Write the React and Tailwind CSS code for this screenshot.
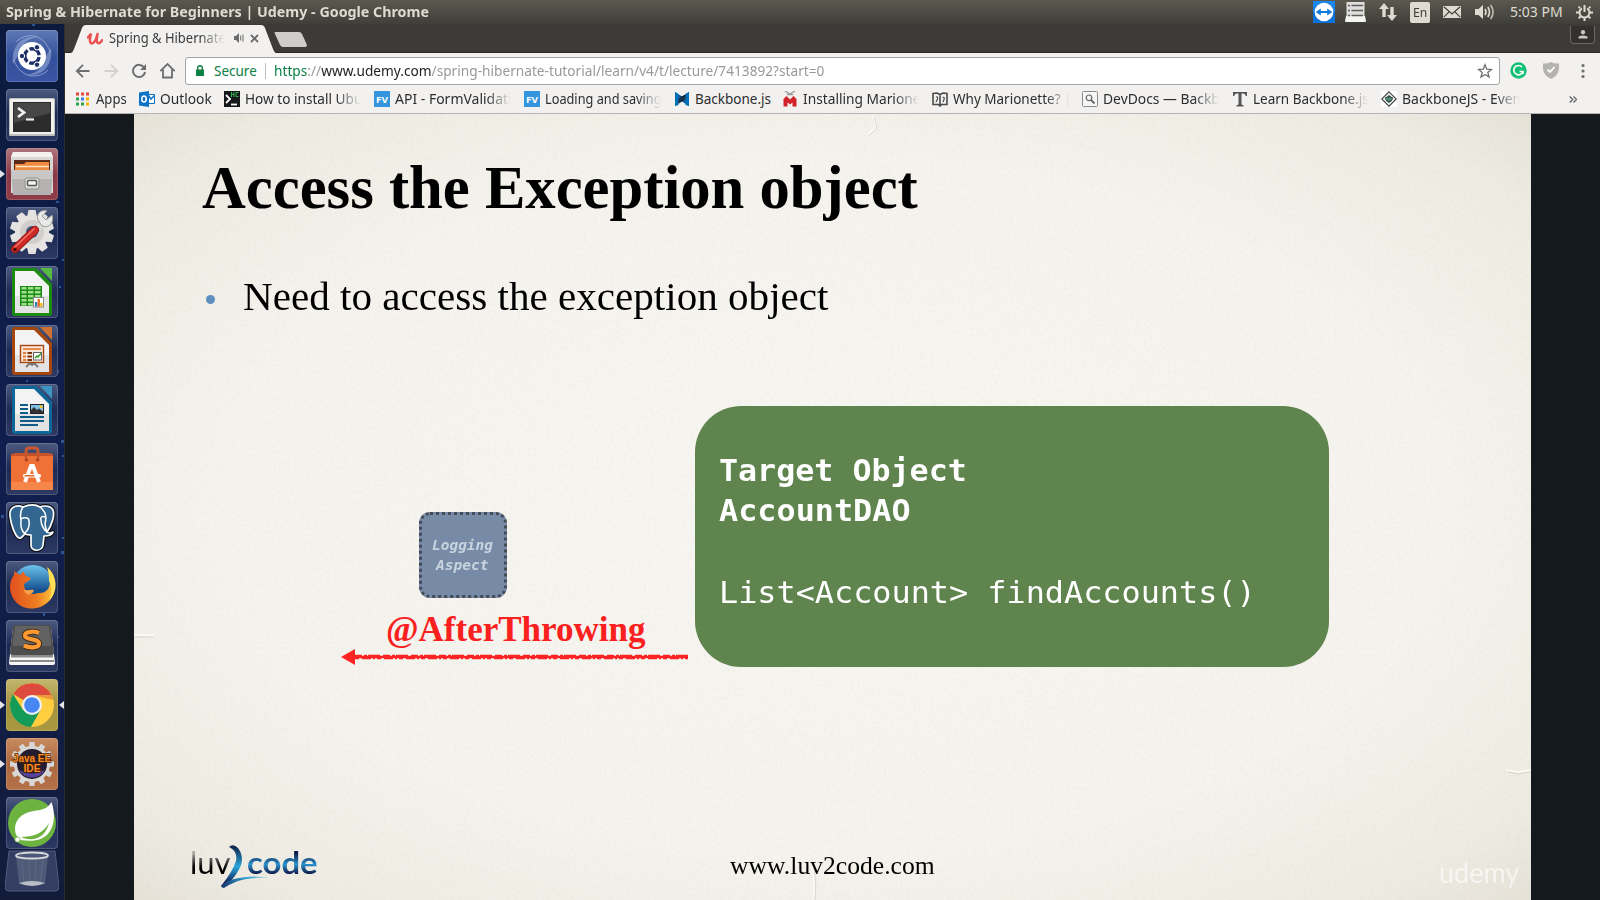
import { useLayoutEffect, useRef, useState } from "react";

// Stretches a single line of text to the width of its box.
function Fit({ className = "", textClass = "", children }) {
  const box = useRef(null);
  const line = useRef(null);
  const [k, setK] = useState(1);
  useLayoutEffect(() => {
    setK(box.current.clientWidth / line.current.offsetWidth);
  }, []);
  return (
    <span ref={box} className={`block shrink-0 whitespace-pre ${className}`}>
      <span ref={line} className={`inline-block origin-left ${textClass}`} style={{ transform: `scaleX(${k})` }}>
        {children}
      </span>
    </span>
  );
}

const fade = "[mask-image:linear-gradient(to_right,black_78%,transparent_99%)]";

/* ---------- top panel ---------- */

function TopPanel() {
  return (
    <header className="flex h-6 shrink-0 items-center bg-linear-to-b from-[#5b594f] to-[#3f3e39] pl-[6px] text-[#dfdbd2]">
      <Fit className="w-[423px] text-[14px] leading-6 font-bold">Spring &amp; Hibernate for Beginners | Udemy - Google Chrome</Fit>
      <div className="ml-auto flex h-6 items-center">
        <svg className="h-[22px] w-[22px]" viewBox="0 0 22 22">
          <rect width="22" height="22" fill="#0a73d9" />
          <rect width="22" height="11" fill="#1b86ea" />
          <circle cx="11" cy="11" r="9.3" fill="#fff" />
          <path d="M2.8 11l5-3.6v2.5h6.4V7.4l5 3.6-5 3.6v-2.500H7.800v2.500z" fill="#0d78dd" />
        </svg>
        <svg className="ml-[10px] h-[20px] w-[21px]" viewBox="0 0 21 20">
          <path d="M1.500 0h18v14h-18z" fill="#dededc" />
          <path d="M1 14h19l1 5q0 1-1 1H1q-1 0-1-1z" fill="#f5f5f4" />
          <path d="M3 3.500h2M3 8.500h2M3 13.500h2M6.500 3.500H18M6.500 8.500H18M6.500 13.500H18" stroke="#5b5b58" strokeWidth="1.600" />
        </svg>
        <svg className="ml-[13px] h-[18px] w-[18px]" viewBox="0 0 18 18" fill="#dfdbd2">
          <path d="M5 0l5 6H6.700v8H3.300V6H0zM13 18l-5-6h3.300V4h3.400v8H18z" />
        </svg>
        <span className="ml-[13px] flex h-[21px] w-5 items-center justify-center rounded-[2px] bg-[#dfdbd2] text-[13px] text-[#3c3b37]">
          <Fit className="w-[14px] leading-5">En</Fit>
        </span>
        <svg className="ml-[13px] h-3 w-[18px]" viewBox="0 0 18 12">
          <rect width="18" height="12" fill="#dfdbd2" />
          <path d="M.8.800L9 8 17.200.800M.8 11.200l5.500-5.500M17.200 11.200l-5.500-5.500" stroke="#3f3e39" strokeWidth="1.200" fill="none" />
        </svg>
        <svg className="ml-[14px] h-[18px] w-5" viewBox="0 0 20 18" fill="none" stroke="#dfdbd2" strokeWidth="1.700">
          <path d="M0 6h3.500L8 2v14l-4.500-4H0z" fill="#dfdbd2" stroke="none" />
          <path d="M10 6q2 3 0 6M12.800 4q3.400 5 0 10" />
          <path d="M15.600 2q5 7 0 14" opacity=".75" />
        </svg>
        <Fit className="ml-[15px] w-[53px] text-[14px] leading-6">5:03 PM</Fit>
        <svg className="mr-[7px] ml-[13px] h-[17px] w-[17px]" viewBox="0 0 17 17" fill="none" stroke="#dfdbd2" strokeWidth="2">
          <path d="M5.800 4.300a5 5 0 1 0 5.400 0" />
          <path d="M8.500 1v7M14 8.500h3M0 8.500h3M8.500 14v3M12.400 12.400l2 2M4.600 12.400l-2 2M13 4l1.400-1.400M4 4L2.600 2.600" />
        </svg>
      </div>
    </header>
  );
}

/* ---------- launcher icons, 52 x 52 ---------- */

const gearTeeth = [0, 36, 72, 108, 144, 180, 216, 252, 288, 324];
const fineTeeth = [0, 30, 60, 90, 120, 150, 180, 210, 240, 270, 300, 330];

function DashIcon() {
  return (
    <>
      <path d="M7 34C5 18 14 5 32 7c-9 1-16 6-17 14M45 18c2 16-7 29-25 27 9-1 16-6 17-14" fill="#9fb2dd" opacity=".55" />
      <path d="M10 12C20 2 38 3 44 22M42 40C32 50 14 48 8 30" stroke="#b9c7e8" strokeWidth="1" fill="none" opacity=".6" />
      <circle cx="26" cy="26" r="14" fill="#fff" />
      <circle cx="26" cy="26" r="7.200" fill="none" stroke="#1c2f66" strokeWidth="3.400" strokeDasharray="13 2.080" transform="rotate(8 26 26)" />
      <g fill="#1c2f66" stroke="#fff" strokeWidth="1">
        <circle cx="16" cy="26" r="2.700" />
        <circle cx="31" cy="17.300" r="2.700" />
        <circle cx="31" cy="34.700" r="2.700" />
      </g>
    </>
  );
}

function TerminalIcon() {
  return (
    <>
      <rect x="3" y="9" width="46" height="38" rx="1.500" fill="#bfbfbd" />
      <rect x="4" y="10" width="44" height="35" rx="1" fill="#f1f1ef" />
      <rect x="7" y="13" width="38" height="30" fill="#2c2c2c" />
      <path d="M8 14h36v10L8 34z" fill="#474747" />
      <path d="M12 19l6 4.500-6 4.500" stroke="#f0f0f0" strokeWidth="2.800" fill="none" />
      <path d="M20 30.500h8" stroke="#f0f0f0" strokeWidth="2.200" />
    </>
  );
}

function FilesIcon() {
  return (
    <>
      <path d="M7 4h38l2 5v36H5V9z" fill="#d9d8d6" />
      <path d="M7 4h38l2 5H5z" fill="#f3f2f1" />
      <rect x="8" y="12" width="36" height="10" fill="#5a2a1c" />
      <path d="M9 16h9l2-2h23v8H9z" fill="#f08a3c" />
      <path d="M10 18.500h33" stroke="#fbe3c8" strokeWidth="1.500" />
      <path d="M5 22h42l-2 25H7z" fill="#b4b3b1" />
      <path d="M5 22h42l-.8 9H5.800z" fill="#c9c8c6" />
      <rect x="19" y="30" width="14" height="11" rx="2" fill="#dddcda" stroke="#8f8e8c" />
      <rect x="21.500" y="32.500" width="9" height="5" rx="1" fill="#f7f7f6" stroke="#555" strokeWidth="1.400" />
    </>
  );
}

function SettingsIcon() {
  return (
    <>
      <g fill="#e4e3e1">
        {gearTeeth.map((a) => (
          <path key={a} d="M21 10l1.500-7h7l1.500 7z" transform={`rotate(${a} 26 25)`} />
        ))}
        <circle cx="26" cy="25" r="17" />
      </g>
      <circle cx="26" cy="25" r="12" fill="#cfcecc" />
      <circle cx="26" cy="25" r="6" fill="#46527b" />
      <path d="M25 28l13-13" stroke="#dcdcda" strokeWidth="6.500" />
      <path d="M46 8l-6 5-4-4 5-5c-7-2-11 4-9 9l4 6c6 3 13-3 10-11z" fill="#e9e9e7" stroke="#9a9997" />
      <path d="M9 42l20-19" stroke="#8d1512" strokeWidth="8" strokeLinecap="round" />
      <path d="M9 42l20-19" stroke="#d02a24" strokeWidth="6.500" strokeLinecap="round" />
      <path d="M9 39.800l19-18" stroke="#ec6b62" strokeWidth="1.600" strokeLinecap="round" />
      <circle cx="9" cy="42.500" r="1.800" fill="#4a0b09" />
    </>
  );
}

function OfficeSheet({ dark, light, children }) {
  return (
    <>
      <path d="M9 2h21l16 16v29q0 3-3 3H9q-3 0-3-3V5q0-3 3-3z" fill={dark} />
      <path d="M34 2h12v13z" fill={light} />
      <path d="M9 5h19l15 15v27H9z" fill="#f4f3f3" />
      <path d="M9 30h34v17H9z" fill="#e4e3e3" />
      {children}
    </>
  );
}

function CalcIcon() {
  return (
    <OfficeSheet dark="#1d8a12" light="#55bb45">
      <rect x="14" y="20" width="22" height="20" fill="#1d8a12" />
      <g fill="#9be08c">
        {[21, 25, 29, 33, 37].map((y) => (
          <path key={y} d={`M15.500 ${y}h5v2.500h-5zM22 ${y}h5.500v2.500H22zM29 ${y}h5.500v2.500H29z`} />
        ))}
      </g>
      <rect x="27.500" y="31.500" width="10" height="9.500" fill="#fff" stroke="#888" />
      <path d="M29 36h2.300v4.500H29z" fill="#2c7fc4" />
      <path d="M31.600 33h2.300v7.500h-2.300z" fill="#e3691e" />
      <path d="M34.200 37h2.300v3.500h-2.300z" fill="#f2b50f" />
    </OfficeSheet>
  );
}

function ImpressIcon() {
  return (
    <OfficeSheet dark="#a4460f" light="#cf7334">
      <rect x="14.500" y="20.500" width="23" height="17" fill="#fbe6d8" stroke="#a4460f" strokeWidth="1.400" />
      <path d="M17 24h18" stroke="#e88b4d" strokeWidth="2" />
      <path d="M17 28h3M17 31.500h3M17 35h3" stroke="#e07a35" strokeWidth="2" />
      <path d="M21.500 28H26M21.500 31.500H26M21.500 35H26" stroke="#7a320a" strokeWidth="2" />
      <rect x="27.500" y="27.500" width="8" height="7.500" fill="#fff" stroke="#666" />
      <path d="M29 33l2-2 1 1 3-3.500" stroke="#2a9a1d" strokeWidth="1.300" fill="none" />
      <path d="M20 42l3-3h6l3 3M26 38v3" stroke="#777" strokeWidth="1.800" fill="none" />
    </OfficeSheet>
  );
}

function WriterIcon() {
  return (
    <OfficeSheet dark="#0f6797" light="#3c94c2">
      <path d="M14 21h8M14 25h8M14 29h8M14 33h24M14 37h24M14 41h18" stroke="#0f5c88" strokeWidth="1.900" />
      <rect x="24.500" y="20.500" width="13" height="9" fill="#7fc0ea" stroke="#222" />
      <path d="M25 29v-3l3-3 3 3 2-1.500 4 3V29z" fill="#333" />
      <circle cx="35" cy="22.800" r="1.500" fill="#f3c21a" />
    </OfficeSheet>
  );
}

function SoftwareIcon() {
  return (
    <>
      <path d="M5 11l4-1h34l4 1v5H5z" fill="#c4532a" />
      <path d="M5 13h42v34H5z" fill="#ef7136" />
      <path d="M5 39h42v8H5z" fill="#f58548" />
      <path d="M20 17V8q0-3 3-3h6q3 0 3 3v9" fill="none" stroke="#c9582f" strokeWidth="2.800" />
      <circle cx="20.500" cy="17" r="1.500" fill="#a13f1d" />
      <circle cx="31.500" cy="17" r="1.500" fill="#a13f1d" />
      <path d="M19 39l6-16h2l6 16" stroke="#fff" strokeWidth="3.800" fill="none" />
      <rect x="17" y="31" width="18" height="3.600" rx="1.500" fill="#fff" />
      <path d="M18.500 32.800h10" stroke="#e0602a" strokeWidth="1.400" />
    </>
  );
}

function PostgresIcon() {
  return (
    <g strokeLinejoin="round" strokeLinecap="round">
      <path
        d="M17 5C9 2 3 6 4 14c1 9 5 20 9 22 3 1 4-3 6-4 2 1 4 1 6 1v10c0 7 11 7 12 0l1-9c4 0 8-1 9-4-2 1-5 1-6 0 5-7 8-17 6-22-2-4-8-5-13-3-5-3-12-2-17 0z"
        fill="#336791" stroke="#0c0f18" strokeWidth="4"
      />
      <path
        d="M17 5C9 2 3 6 4 14c1 9 5 20 9 22 3 1 4-3 6-4 2 1 4 1 6 1v10c0 7 11 7 12 0l1-9c4 0 8-1 9-4-2 1-5 1-6 0 5-7 8-17 6-22-2-4-8-5-13-3-5-3-12-2-17 0z"
        fill="#336791" stroke="#fff" strokeWidth="1.700"
      />
      <path d="M17 5c-3 4-3 8-2 13 0 5-1 9 4 14M34 5c5 4 7 10 5 16 0 4 1 6 2 9M15 17c3-2 8-2 8 2 1 6-1 9-4 12M39 15c-3-1-5 0-4 3 0 5 3 10 6 12" fill="none" stroke="#fff" strokeWidth="1.500" />
    </g>
  );
}

function FirefoxIcon() {
  return (
    <>
      <circle cx="27" cy="25" r="21" fill="url(#globe)" />
      <path d="M45 12c4 8 6 20-2 28-9 10-26 10-34 0C2 31 3 20 8 14v-4l6 4 4-4c0 3 1 5 5 6l2 2-7 5c0 8 7 12 14 9 8 1 12-5 12-11z" fill="url(#flame)" />
      <path d="M41 6c10 8 12 24 2 34 3-8 3-14 0-20 0-4 0-8-2-14z" fill="#ffdf55" />
      <path d="M17 28c4 3 7 0 11 1-1 4-7 8-11-1z" fill="#f8a04b" />
    </>
  );
}

function SublimeIcon() {
  return (
    <>
      <path d="M7 8h38l4 35q0 2-2 2H5q-2 0-2-2z" fill="#f6f6f6" />
      <path d="M5 35h42v2.500H5zM4 40h44v2H4z" fill="#8c8c8c" />
      <path d="M9 5h34q2 0 2 2l3 26q0 2-2 2H6q-2 0-2-2L7 7q0-2 2-2z" fill="#4d4d4d" />
      <path d="M9 6h34l2.500 20H6.500z" fill="#626262" />
      <path d="M33 13c-4-2-14-2-14 2.500s14 3 14 8-10 4.500-15 2" fill="none" stroke="#3a2a17" strokeWidth="6" />
      <path d="M33 13c-4-2-14-2-14 2.500s14 3 14 8-10 4.500-15 2" fill="none" stroke="#ff9a33" strokeWidth="4.200" />
    </>
  );
}

function ChromeIcon() {
  return (
    <>
      <circle cx="26" cy="26" r="22" fill="#ffcd40" />
      <path d="M26 26L7 15a22 22 0 0 1 38.500 1H26z" fill="#dd4b3e" />
      <path d="M7 15a22 22 0 0 0 18 33l9.500-17L17 31z" fill="#149b58" />
      <path d="M26 16h19.500L47 21z" fill="#c23b2e" opacity=".35" />
      <circle cx="26" cy="26" r="10" fill="#f1f1f1" />
      <circle cx="26" cy="26" r="7.800" fill="#4687f4" />
    </>
  );
}

function EclipseIcon() {
  return (
    <>
      <g fill="#d9d7d6">
        {fineTeeth.map((a) => (
          <path key={a} d="M23 10l.5-6h5l.5 6z" transform={`rotate(${a} 26 26)`} />
        ))}
        <circle cx="26" cy="26" r="18" />
      </g>
      <circle cx="26" cy="26" r="15" fill="#231d2f" />
      <path d="M13 32a15 15 0 0 0 26 0q-13 7-26 0z" fill="#56459a" />
      <g fontFamily="Liberation Sans" fontWeight="700" fontSize="10.500" fill="#f98a22" stroke="#4a2204" strokeWidth="1.400" paintOrder="stroke" textAnchor="middle">
        <text x="26" y="24" textLength="38" lengthAdjust="spacingAndGlyphs">Java EE</text>
        <text x="26" y="34" textLength="17" lengthAdjust="spacingAndGlyphs">IDE</text>
      </g>
    </>
  );
}

function SpringIcon() {
  return (
    <>
      <circle cx="26" cy="26" r="24" fill="#6db33f" />
      <path d="M45.500 5c-4 7-10 8-18 9C15 16 9 23 9 32c0 5 2 8 5 11 12 2 24 1 30-9 5-8 5-18 1.500-29z" fill="#fff" />
      <path d="M15 40c11 0 22-3 28-14-4 16-17 19-28 14z" fill="#6db33f" />
      <circle cx="11.500" cy="42.500" r="2.600" fill="#fff" stroke="#6db33f" strokeWidth=".8" />
    </>
  );
}

const launcher = [
  { icon: DashIcon, tile: "bg-linear-to-b from-[#5f7ab6] via-[#34509b] to-[#3a56a4]" },
  { icon: TerminalIcon },
  { icon: FilesIcon, tile: "bg-linear-to-b from-[#b0767f] via-[#8a3a47] to-[#8e3c48]", open: true },
  { icon: SettingsIcon },
  { icon: CalcIcon },
  { icon: ImpressIcon },
  { icon: WriterIcon },
  { icon: SoftwareIcon },
  { icon: PostgresIcon },
  { icon: FirefoxIcon },
  { icon: SublimeIcon },
  { icon: ChromeIcon, tile: "bg-linear-to-b from-[#c2b76f] via-[#a5923f] to-[#a8983f]", open: true, active: true },
  { icon: EclipseIcon, tile: "bg-linear-to-b from-[#c98b62] via-[#ac683d] to-[#b5714a]", open: true },
  { icon: SpringIcon },
];

function Launcher() {
  return (
    <nav className="relative flex w-[65px] shrink-0 flex-col gap-[7px] overflow-hidden border-r border-[#2e2d2b] bg-linear-to-b from-[#0b1a3d] via-[#111f50] to-[#121c3a] pt-[6px] pl-[6px]">
      <svg className="absolute top-0 left-0 h-[876px] w-16" viewBox="0 0 64 876" fill="#2f5590">
        <path d="M32 0h3v2h-3zM54 158h2v2h-2zM56 177h3v2h-3zM62 235h2v2h-2zM59 262h2v2h-2zM55 346h4v3h-4zM26 356h2v2h-2zM61 416h3v3h-3zM62 431h2v2h-2zM1 491h3v3H1zM62 513h2v2h-2zM61 527h3v3h-3zM43 589h2v3h-2zM57 612h2v2h-2z" />
      </svg>
      {launcher.map(({ icon: Icon, tile = "bg-linear-to-b from-[#4d5a80] via-[#1d2a53] to-[#2e3a64]", open, active }, i) => (
        <div key={i} className={`relative h-[52px] w-[52px] shrink-0 rounded-[4px] shadow-[inset_0_0_0_1px_rgba(255,255,255,0.16)] ${tile}`}>
          <svg className="h-[52px] w-[52px]" viewBox="0 0 52 52">
            <defs>
              <linearGradient id="globe" x1="0" y1="0" x2="0" y2="1">
                <stop offset="0" stopColor="#6cc3ee" />
                <stop offset=".6" stopColor="#14508f" />
              </linearGradient>
              <linearGradient id="flame" x1="0" y1="0" x2="1" y2="0">
                <stop offset="0" stopColor="#e0501f" />
                <stop offset=".6" stopColor="#ef7d22" />
                <stop offset="1" stopColor="#fcc93c" />
              </linearGradient>
            </defs>
            <Icon />
          </svg>
          {open && (
            <svg className="absolute top-[22px] -left-[6px] h-2 w-[5px]" viewBox="0 0 5 8">
              <path d="M0 0l5 4-5 4z" fill="#e3e3e6" />
            </svg>
          )}
          {active && (
            <svg className="absolute top-[22px] -right-[6px] h-2 w-[5px]" viewBox="0 0 5 8">
              <path d="M5 0L0 4l5 4z" fill="#e3e3e6" />
            </svg>
          )}
        </div>
      ))}
      <svg className="-mt-[6px] -ml-px h-[42px] w-[54px] shrink-0" viewBox="0 0 54 42">
        <path d="M4 1h46l4 36q0 4-4 4H4q-4 0-4-4z" fill="#333e62" stroke="#4f5b80" />
        <path d="M11 6h32l-3 28q-13 4-26 0z" fill="#5a6480" opacity=".75" />
        <path d="M17 9l2 25M24 9l1 26M31 9l-1 26M38 9l-3 25" stroke="#7d869c" opacity=".3" />
        <ellipse cx="27" cy="5.500" rx="16" ry="3" fill="#4d5878" stroke="#d5d8dc" strokeWidth="1.800" />
        <path d="M14 33q13-4 26 0-13 6-26 0z" fill="#b9bdc6" />
      </svg>
    </nav>
  );
}

/* ---------- browser chrome ---------- */

function TabStrip() {
  return (
    <div className="flex h-[29px] border-b border-[#2a2927] bg-[#3c3b37] text-[#3b3b3b]">
      <div className="relative ml-[6px] flex h-[29px] w-[206px] items-center pb-px pl-[16px]">
        <svg className="absolute top-[1px] left-0 h-[28px] w-[206px]" viewBox="0 0 206 28">
          <path d="M0 28q2-1 3-4L11 3q1-3 4-3h175q3 0 4 3l8 21q1 3 3 4z" fill="#f2f1f0" />
        </svg>
        <svg className="relative h-[13px] w-4" viewBox="0 0 16 13" fill="none" stroke="#ec5252" strokeLinecap="round">
          <path d="M.8 5.500Q3 3.500 4 1.500 1.500 11 4.800 11.500 8.500 11 10.500 2M10.500 2.500Q8.500 11 11.500 11.200q2 0 3.700-3" strokeWidth="2.500" />
        </svg>
        <Fit className={`relative ml-[6px] w-[117px] text-[13.500px] leading-6 ${fade}`}>Spring &amp; Hibernate</Fit>
        <svg className="relative ml-2 h-[10px] w-[10px]" viewBox="0 0 10 10">
          <path d="M0 3h2l3-3v10L2 7H0z" fill="#6a6a6a" />
          <path d="M6.700 2.500v5M9 1.500v7" stroke="#6a6a6a" />
        </svg>
        <svg className="relative ml-[6px] h-[9px] w-[9px]" viewBox="0 0 9 9">
          <path d="M1 1l7 7M8 1L1 8" stroke="#6a6a6a" strokeWidth="1.800" />
        </svg>
      </div>
      <svg className="mt-2 -ml-[3px] h-[15px] w-[34px]" viewBox="0 0 34 15">
        <path d="M1 0h24q2 0 3 2l5 11q0 2-2 2H9q-2 0-3-2L1 2q-1-2 0-2z" fill="#cfcdcc" />
      </svg>
      <div className="mt-[2px] mr-[5px] ml-auto flex h-[18px] w-[25px] items-center justify-center rounded-b-[4px] border border-t-0 border-[#6b6a65] bg-[#32312e]">
        <svg className="h-[9px] w-[10px]" viewBox="0 0 10 10" fill="#c9c7c2">
          <circle cx="5" cy="2.500" r="2.400" />
          <path d="M0 9.500V8q0-2 5-2t5 2v1.500z" />
        </svg>
      </div>
    </div>
  );
}

function Toolbar() {
  return (
    <div className="flex h-[34px] items-center bg-[#f2f1f0] pt-px pl-[10px]">
      <svg className="h-4 w-4" viewBox="0 0 16 16" fill="none" stroke="#6e6e6e" strokeWidth="1.800">
        <path d="M14.500 8H2M8 1.800L1.800 8 8 14.200" />
      </svg>
      <svg className="ml-3 h-4 w-4" viewBox="0 0 16 16" fill="none" stroke="#d2d1d0" strokeWidth="1.800">
        <path d="M1.500 8H14M8 1.800L14.200 8 8 14.200" />
      </svg>
      <svg className="ml-3 h-4 w-4" viewBox="0 0 16 16" fill="none" stroke="#6e6e6e" strokeWidth="2">
        <path d="M13.300 4.800A6.100 6.100 0 1 0 14.100 9" />
        <path d="M15 1v6H9z" fill="#6e6e6e" stroke="none" />
      </svg>
      <svg className="ml-3 h-[17px] w-[17px]" viewBox="0 0 17 17" fill="none" stroke="#6e6e6e" strokeWidth="1.800">
        <path d="M1.300 9.200L8.500 2l7.200 7.200M4 7.500v8h9v-8" />
      </svg>
      <div className="ml-[9px] flex h-7 w-[1315px] items-center rounded-[3px] border border-[#a5a4a3] bg-white pl-[10px] text-[13.500px]">
        <svg className="h-[11px] w-2" viewBox="0 0 8 11">
          <path d="M0 4.500h8V11H0z" fill="#0b8043" />
          <path d="M1.700 5V3a2.300 2.300 0 0 1 4.600 0v2" fill="none" stroke="#0b8043" strokeWidth="1.400" />
        </svg>
        <Fit className="ml-[10px] w-[43px] leading-6 text-[#0b8043]">Secure</Fit>
        <span className="ml-2 h-4 w-px bg-[#bdbdbd]" />
        <Fit className="ml-[8px] w-[550px] leading-6 text-[#999]">
          <span className="text-[#0b8043]">https</span>://<span className="text-[#222]">www.udemy.com</span>/spring-hibernate-tutorial/learn/v4/t/lecture/7413892?start=0
        </Fit>
        <svg className="mr-[6px] ml-auto h-4 w-4" viewBox="0 0 16 16" fill="none" stroke="#6e6e6e" strokeWidth="1.300">
          <path d="M8 1.800l1.700 4.400 4.700.300-3.600 3 1.200 4.600L8 11.500l-4 2.600 1.200-4.600-3.600-3 4.700-.3z" />
        </svg>
      </div>
      <svg className="ml-[10px] h-[17px] w-[17px]" viewBox="0 0 17 17">
        <circle cx="8.500" cy="8.500" r="8.200" fill="#15c076" />
        <path d="M12 5A4.700 4.700 0 1 0 13 9.500H9.500M13 9.500v2.500" fill="none" stroke="#fff" strokeWidth="1.600" />
      </svg>
      <svg className="ml-4 h-[17px] w-4" viewBox="0 0 16 17">
        <path d="M8 0q4 2 8 1.500V7q-1 7-8 10Q1 14 0 7V1.500Q4 2 8 0z" fill="#b4b3b2" />
        <path d="M4.500 7.500L7 10l4.500-5" fill="none" stroke="#fff" strokeWidth="1.800" />
      </svg>
      <svg className="ml-[22px] h-4 w-1" viewBox="0 0 4 16" fill="#6e6e6e">
        <circle cx="2" cy="2.500" r="1.600" />
        <circle cx="2" cy="8" r="1.600" />
        <circle cx="2" cy="13.500" r="1.600" />
      </svg>
    </div>
  );
}

function FvIcon() {
  return (
    <>
      <path d="M0 0h16v16H0z" fill="#3595dc" />
      <text x="8" y="11.800" textAnchor="middle" fontSize="9.500" textLength="12" lengthAdjust="spacingAndGlyphs" fontWeight="700" fontFamily="Open Sans" fill="#fff">FV</text>
    </>
  );
}

const bookmarks = [
  {
    label: "Apps", gap: "ml-[10px]", width: "w-[31px]", pad: "ml-[5px]",
    icon: (
      <>
        <path d="M1 1.500h3v3H1zM6 1.500h3v3H6zM11 1.500h3v3h-3z" fill="#e8453c" />
        <path d="M1 6.500h3v3H1z" fill="#2fa24f" />
        <path d="M6 6.500h3v3H6z" fill="#3f7de8" />
        <path d="M11 6.500h3v3h-3z" fill="#f6b400" />
        <path d="M1 11.500h3v3H1zM6 11.500h3v3H6z" fill="#2fa24f" />
        <path d="M11 11.500h3v3h-3z" fill="#f6b400" />
      </>
    ),
  },
  {
    label: "Outlook", gap: "ml-[12px]", width: "w-[52px]", pad: "ml-[5px]",
    icon: (
      <>
        <path d="M9 3.500h6.500v9H9z" fill="#fff" stroke="#0b72c6" />
        <path d="M9 4l3 4 4-4" fill="none" stroke="#0b72c6" strokeWidth="1.500" />
        <path d="M0 1.500L10 0v16L0 14.500z" fill="#0b72c6" />
        <ellipse cx="5" cy="8" rx="2.200" ry="3" fill="none" stroke="#fff" strokeWidth="1.600" />
      </>
    ),
  },
  {
    label: "How to install Ubu", gap: "ml-[12px]", width: "w-[117px]", pad: "ml-[5px]", cut: true,
    icon: (
      <>
        <path d="M0 0h16v16H0z" fill="#15191c" />
        <path d="M2 4l4 4-4 4" stroke="#fff" strokeWidth="1.800" fill="none" />
        <path d="M7 13.500h6" stroke="#fff" strokeWidth="1.800" />
        <path d="M7.500 1v5M10 1v5M7.500 3.500H10M14.500 1.500H12v4h2.500" stroke="#34b44a" fill="none" />
      </>
    ),
  },
  { label: "API - FormValidati", gap: "ml-[12px]", width: "w-[117px]", pad: "ml-[5px]", cut: true, icon: <FvIcon /> },
  { label: "Loading and saving", gap: "ml-[12px]", width: "w-[117px]", pad: "ml-[5px]", cut: true, icon: <FvIcon /> },
  {
    label: "Backbone.js", gap: "ml-[12px]", width: "w-[76px]", pad: "ml-[5px]",
    icon: (
      <>
        <path d="M1 1l14 9v5L1 6z" fill="#0b5fa8" />
        <path d="M15 1L1 10v5l14-9z" fill="#1d3347" />
        <path d="M1 1l3.500 2v11L1 15zM15 1l-3.500 2v11l3.500 1z" fill="#0071b5" />
        <path d="M5.500 5.500L8 7l2.500-1.500V4L8 5.500zM5.500 10L8 8.700l2.500 1.300" fill="#002a41" />
      </>
    ),
  },
  {
    label: "Installing Marione", gap: "ml-[11px]", width: "w-[117px]", pad: "ml-[5px]", cut: true,
    icon: (
      <>
        <path d="M3 0l5 3 5-3M5 3.500h6" stroke="#9a9a9a" strokeWidth="1.300" fill="none" />
        <path d="M1.500 15.500V8l3-3L8 8.500 11.500 5l3 3v7.500h-4v-4L8 13.500l-2.500-2v4z" fill="#d2232a" />
      </>
    ),
  },
  {
    label: "Why Marionette? |", gap: "ml-[12px]", width: "w-[118px]", pad: "ml-[5px]", cut: true,
    icon: (
      <>
        <path d="M1 2.500l4-.5 3 1.500L11 2l4 .5v11H9.500L8 15l-1.500-1.500H1zM8 3.500V14" fill="none" stroke="#4a4a4a" strokeWidth="1.600" />
        <path d="M4 6q2-1 1.500 2L4 11M10.500 6.500q2.500-1 1.500 2l-1 2.500" fill="none" stroke="#4a4a4a" strokeWidth="1.200" />
      </>
    ),
  },
  {
    label: "DevDocs — Backb", gap: "ml-[11px]", width: "w-[117px]", pad: "ml-[5px]", cut: true,
    icon: (
      <>
        <rect x=".5" y=".5" width="15" height="15" rx="1" fill="#f6f6f6" stroke="#8a8a8a" />
        <circle cx="7" cy="6.800" r="2.800" fill="none" stroke="#666" strokeWidth="1.200" />
        <path d="M9 9l3.500 3.500" stroke="#666" strokeWidth="1.800" />
      </>
    ),
  },
  {
    label: "Learn Backbone.js", gap: "ml-[12px]", width: "w-[116px]", pad: "ml-[5px]", cut: true,
    icon: (
      <path d="M1 1h14v4h-1.200q-.3-2.500-2.500-2.500H9.500V13q0 1.200 2 1.300V15.500h-7v-1.200q2-.1 2-1.300V2.500H4.700Q2.500 2.500 2.200 5H1z" fill="#555" />
    ),
  },
  {
    label: "BackboneJS - Even", gap: "ml-[12px]", width: "w-[119px]", pad: "ml-[5px]", cut: true,
    icon: (
      <>
        <path d="M0 0h16v16H0z" fill="#fff" />
        <path d="M8 .8L15.200 8 8 15.200.8 8z" fill="none" stroke="#444" strokeWidth="1.200" />
        <path d="M8 3.500L12.500 8 8 12.500 3.500 8z" fill="#4f8b73" />
        <path d="M4 7q4-3 8 0M5 9.500q3 2 6 0" stroke="#333" fill="none" />
      </>
    ),
  },
];

function BookmarksBar() {
  return (
    <div className="flex h-[27px] items-center border-b border-[#b4b3b1] bg-[#f2f1f0] pb-[2px] text-[13.500px] text-[#2d2d2d]">
      {bookmarks.map(({ label, gap, width, pad, cut, icon }) => (
        <div key={label} className={`flex shrink-0 items-center ${gap}`}>
          <svg className="h-4 w-4" viewBox="0 0 16 16">{icon}</svg>
          <Fit className={`leading-6 ${pad} ${width} ${cut ? fade : ""}`}>{label}</Fit>
        </div>
      ))}
      <svg className="mr-[23px] ml-auto h-[7px] w-2" viewBox="0 0 8 7" fill="none" stroke="#666" strokeWidth="1.400">
        <path d="M.7.500l3 3-3 3M4.500.500l3 3-3 3" />
      </svg>
    </div>
  );
}

/* ---------- lecture slide ---------- */

function Paper() {
  return (
    <svg className="absolute inset-0 h-full w-full" viewBox="0 0 1397 786" preserveAspectRatio="none">
      <defs>
        <radialGradient id="sheet" cx=".5" cy=".5" r=".74">
          <stop offset="0" stopColor="#f8f6f2" />
          <stop offset=".6" stopColor="#f5f3ed" />
          <stop offset=".85" stopColor="#eeebe3" />
          <stop offset="1" stopColor="#e2ded3" />
        </radialGradient>
        <filter id="grain" x="0" y="0" width="1" height="1">
          <feTurbulence type="fractalNoise" baseFrequency=".3" numOctaves="3" seed="4" />
          <feColorMatrix values="0 0 0 0 .4  0 0 0 0 .37  0 0 0 0 .28  .12 0 0 0 -.045" />
        </filter>
      </defs>
      <path d="M0 0h1397v786H0z" fill="url(#sheet)" />
      <path d="M0 0h1397v786H0z" filter="url(#grain)" />
      <g fill="none" stroke="#fcfbf8" strokeWidth="1.500">
        <path d="M738 2q6 8 4 11l-8 7M0 521h20M679 786q3-16-1-34M1372 656l12 2 13-2" />
      </g>
      <g fill="none" stroke="#c9c4b7" strokeWidth="1" opacity=".6">
        <path d="M740 4q4 8 2 11l-7 7M0 523h20M681 786q2-16-1-32M1374 658l10 2 12-2" />
      </g>
    </svg>
  );
}

function Logo() {
  return (
    <div className="relative flex h-[46px] w-[130px] items-start font-['Lato']">
      <Fit className="w-[41px] text-[31px] leading-[37px]" textClass="bg-linear-to-b from-[#a9a9a6] from-25% to-black to-70% bg-clip-text text-transparent">luv</Fit>
      <svg className="absolute top-0 left-[29px] h-[46px] w-[56px]" viewBox="0 0 56 46">
        <defs>
          <linearGradient id="swoosh" x1="0" y1="0" x2="0" y2="1">
            <stop offset="0" stopColor="#101d45" />
            <stop offset=".5" stopColor="#2aa5da" />
            <stop offset=".85" stopColor="#142a5e" />
          </linearGradient>
          <linearGradient id="tail" x1="0" y1="0" x2="1" y2="0">
            <stop offset="0" stopColor="#16336b" />
            <stop offset=".5" stopColor="#2f9fcf" />
            <stop offset="1" stopColor="#9fd3e6" />
          </linearGradient>
        </defs>
        <path d="M10 3q4-4 9 1 6 8 3 17-4 10-13 19l-5 4-2-2Q14 27 17 17 19 7 10 3z" fill="url(#swoosh)" />
        <path d="M2 42q6-6 18-8 14-3 31 0-20-1-32 3Q9 41 5 44z" fill="url(#tail)" />
      </svg>
      <Fit className="ml-[16px] w-[71px] text-[31px] leading-[37px] font-bold" textClass="bg-linear-to-b from-[#0d1d4c] from-25% via-[#2a93cf] via-55% to-[#101f4e] to-80% bg-clip-text text-transparent">code</Fit>
    </div>
  );
}

function Slide() {
  return (
    <section className="relative flex h-[786px] w-[1397px] flex-col overflow-hidden font-['Liberation_Serif',serif] text-black">
      <Paper />
      <h1 className="relative mt-[41px] ml-[68px] text-[62px] leading-[64px] font-bold">
        <Fit className="w-[716px]">Access the Exception object</Fit>
      </h1>
      <div className="relative mt-[58px] ml-[72px] flex items-center text-[39px] leading-[40px]">
        <span className="mt-[4px] h-[9px] w-[9px] rounded-full bg-[#5f8fbf]" />
        <Fit className="ml-[28px] w-[586px]">Need to access the exception object</Fit>
      </div>
      <div className="relative h-[509px]">
        <div className="absolute top-[195px] left-[285px] flex h-[86px] w-[88px] flex-col items-center justify-center rounded-[11px] border-3 border-dotted border-[#434a58] bg-[#788ba6] pr-px font-['DejaVu_Sans_Mono',monospace] text-[14px] leading-[20px] font-bold text-[#c8d4df] italic">
          <Fit className="w-[61px]">Logging</Fit>
          <Fit className="w-[53px]">Aspect</Fit>
        </div>
        <div className="absolute top-[295px] left-[252px] text-[35px] leading-[36px] font-bold text-[#fa2020]">
          <Fit className="w-[259px]">@AfterThrowing</Fit>
        </div>
        <svg className="absolute top-[332px] left-[207px] h-4 w-[348px]" viewBox="0 0 348 16">
          <path d="M0 8L14 0v16z" fill="#fb2323" />
          <path d="M12 8h335" stroke="#fb2323" strokeWidth="2.400" />
          <path d="M14 6.400h333" stroke="#fb2323" strokeWidth="1.200" strokeDasharray="7 2 3 1 12 3" />
          <path d="M14 9.600h333" stroke="#fb2323" strokeWidth="1.200" strokeDasharray="4 3 9 2 2 2" />
        </svg>
        <div className="absolute top-[89px] left-[561px] h-[261px] w-[634px] rounded-[46px] bg-[#5f844e] pt-[45px] pl-[24px] font-['DejaVu_Sans_Mono',monospace] text-[30px] leading-[40px] text-white">
          <Fit className="w-[248px] font-bold">Target Object</Fit>
          <Fit className="w-[192px] font-bold">AccountDAO</Fit>
          <Fit className="mt-[42px] w-[537px]">{"List<Account> findAccounts()"}</Fit>
        </div>
      </div>
      <footer className="relative flex items-start pl-[56px]">
        <div className="mt-[18px]"><Logo /></div>
        <Fit className="mt-[26px] ml-[410px] w-[205px] text-[25px] leading-[28px]">www.luv2code.com</Fit>
        <Fit className="mt-[29px] ml-[504px] w-[80px] font-['Lato'] text-[28px] leading-[34px] text-white/60">udemy</Fit>
      </footer>
    </section>
  );
}

export default function App() {
  return (
    <div className="flex h-[900px] w-[1600px] flex-col overflow-hidden bg-[#14191d] font-['Noto_Sans','Open_Sans',sans-serif]">
      <TopPanel />
      <div className="flex h-[876px]">
        <Launcher />
        <main className="flex min-w-0 flex-1 flex-col">
          <TabStrip />
          <Toolbar />
          <BookmarksBar />
          <div className="ml-[69px]">
            <Slide />
          </div>
        </main>
      </div>
    </div>
  );
}
